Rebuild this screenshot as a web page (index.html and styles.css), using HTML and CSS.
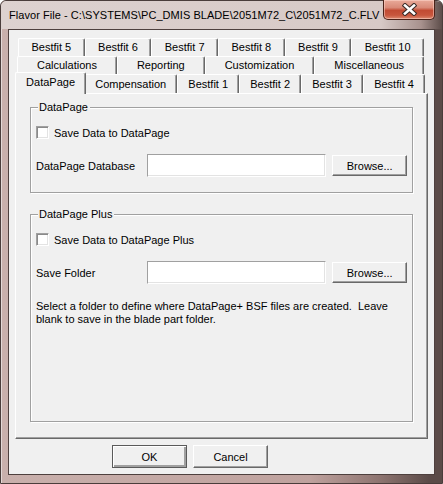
FILE: index.html
```html
<!DOCTYPE html>
<html lang="en">
<head>
    <meta charset="UTF-8">
    <title>Flavor File</title>
    <link rel="stylesheet" href="styles.css">
</head>
<body>
    <div class="window">
        <div class="titlebar">
            <span class="title">Flavor File - C:\SYSTEMS\PC_DMIS BLADE\2051M72_C\2051M72_C.FLV</span>
            <div class="close-btn">
                <svg width="15" height="13" viewBox="0 0 15 13">
                    <path d="M3 2.5 L12 10.5 M12 2.5 L3 10.5" stroke="#3a2a26" stroke-width="4.6" stroke-linecap="square"/>
                    <path d="M3 2.5 L12 10.5 M12 2.5 L3 10.5" stroke="#ffffff" stroke-width="2.6" stroke-linecap="square"/>
                </svg>
            </div>
        </div>

        <div class="client">
            <div class="tabctl">
                <div class="tab-row row-back">
                    <div class="tab">Bestfit 5</div>
                    <div class="tab">Bestfit 6</div>
                    <div class="tab">Bestfit 7</div>
                    <div class="tab">Bestfit 8</div>
                    <div class="tab">Bestfit 9</div>
                    <div class="tab">Bestfit 10</div>
                </div>
                <div class="tab-row row-mid">
                    <div class="tab">Calculations</div>
                    <div class="tab">Reporting</div>
                    <div class="tab">Customization</div>
                    <div class="tab">Miscellaneous</div>
                </div>
                <div class="tab-row row-front">
                    <div class="tab active">DataPage</div>
                    <div class="tab">Compensation</div>
                    <div class="tab">Bestfit 1</div>
                    <div class="tab">Bestfit 2</div>
                    <div class="tab">Bestfit 3</div>
                    <div class="tab">Bestfit 4</div>
                </div>

                <div class="tab-panel">
                    <div class="group">
                        <span class="group-title">DataPage</span>
                        <label class="check-row"><span class="checkbox"></span>Save Data to DataPage</label>
                        <div class="field-row">
                            <span class="field-label">DataPage Database</span>
                            <input type="text" class="textbox">
                            <button class="button">Browse...</button>
                        </div>
                    </div>

                    <div class="group group-grow">
                        <span class="group-title">DataPage Plus</span>
                        <label class="check-row"><span class="checkbox"></span>Save Data to DataPage Plus</label>
                        <div class="field-row">
                            <span class="field-label">Save Folder</span>
                            <input type="text" class="textbox">
                            <button class="button">Browse...</button>
                        </div>
                        <p class="hint">Select a folder to define where DataPage+ BSF files are created.&nbsp; Leave blank to save in the blade part folder.</p>
                    </div>
                </div>
            </div>

            <div class="dlg-buttons">
                <button class="button default">OK</button>
                <button class="button">Cancel</button>
            </div>
        </div>
    </div>
</body>
</html>
```

FILE: styles.css
```css
* {
    margin: 0;
    padding: 0;
    box-sizing: border-box;
}

body {
    font-family: "Liberation Sans", Arial, sans-serif;
    font-size: 11px;
    color: #000;
    background: #fff;
}

.window {
    width: 443px;
    height: 484px;
    display: flex;
    flex-direction: column;
    padding: 0 7px 8px 7px;
    background: linear-gradient(to right, #c9b0ac 0%, #bfa29e 70%, #8d7470 86%, #5b4b48 97%);
    border: 1px solid #4a3d3b;
    border-radius: 6px 6px 0 0;
    box-shadow: inset 1px 1px 0 #e3d8d6;
}

.titlebar {
    height: 28px;
    margin: 0 -7px 0 -7px;
    padding: 0 7px 0 8px;
    display: flex;
    align-items: flex-start;
    background: linear-gradient(to right, #ddd2d0 0px, #d7c9c6 380px, #a8928e 420px, #5d4d4a 441px);
    border-radius: 6px 6px 0 0;
}

.title {
    flex: 1;
    min-width: 0;
    overflow: hidden;
    font-family: "Liberation Sans", Arial, sans-serif;
    font-size: 11px;
    letter-spacing: 0.05px;
    line-height: 16px;
    padding-top: 6px;
    white-space: nowrap;
    color: #000;
}

.close-btn {
    flex: none;
    width: 52px;
    height: 20px;
    margin-top: -1px;
    display: flex;
    align-items: center;
    justify-content: center;
    border: 1px solid #4b2219;
    border-top: none;
    border-radius: 0 0 5px 5px;
    background: linear-gradient(to bottom, #e9aa9a 0%, #d98a78 40%, #c24b33 55%, #c8563d 80%, #dc8a70 100%);
    box-shadow: inset 0 0 0 1px rgba(255, 220, 210, 0.5);
}

.client {
    flex: 1;
    display: flex;
    flex-direction: column;
    background: #f0f0f0;
    border: 1px solid #4e403e;
    padding: 8px 6px 0 6px;
}

.tabctl {
    flex: 1;
    display: flex;
    flex-direction: column;
}

.tab-row {
    display: flex;
    height: 18px;
}

.row-back {
    margin: 0 4px 0 3px;
}

.row-mid {
    margin: 0 4px 0 2px;
}

.row-front {
    height: 19px;
    margin: 0 3px 0 2px;
}

.tab {
    flex: 1 1 auto;
    display: flex;
    align-items: center;
    justify-content: center;
    padding: 0 6px 1px 6px;
    background: #f0f0f0;
    border-top: 1px solid #fff;
    border-left: 1px solid #fff;
    border-right: 1px solid #696969;
    box-shadow: inset -1px 0 0 #a0a0a0;
    border-radius: 2px 2px 0 0;
    white-space: nowrap;
}

.tab.active {
    position: relative;
    z-index: 1;
    height: 22px;
    margin: -2px -2px -1px -2px;
    padding-bottom: 3px;
}

.tab-panel {
    flex: 1;
    display: flex;
    flex-direction: column;
    padding: 13px 14px 16px 14px;
    border-top: 1px solid #fff;
    border-left: 1px solid #fff;
    border-right: 1px solid #696969;
    border-bottom: 1px solid #696969;
    box-shadow: inset -1px -1px 0 #a0a0a0;
}

.group {
    display: flex;
    flex-direction: column;
    padding: 0 5px 15px 5px;
    border: 1px solid #a0a0a0;
    box-shadow: inset 1px 1px 0 #fff, 1px 1px 0 #fff;
}

.group + .group {
    margin-top: 21px;
}

.group-grow {
    flex: 1;
}

.group-title {
    align-self: flex-start;
    margin: -7px 0 0 2px;
    padding: 0 2px 0 1px;
    line-height: 13px;
    background: #f0f0f0;
}

.check-row {
    display: flex;
    align-items: center;
    margin-top: 12px;
    height: 13px;
}

.checkbox {
    width: 13px;
    height: 13px;
    margin-right: 5px;
    background: #fff;
    border-top: 1px solid #a0a0a0;
    border-left: 1px solid #a0a0a0;
    border-right: 1px solid #fff;
    border-bottom: 1px solid #fff;
    box-shadow: inset 1px 1px 0 #8a8a8a, inset -1px -1px 0 #e3e3e3;
}

.field-row {
    display: flex;
    align-items: center;
    margin-top: 15px;
    height: 23px;
}

.field-label {
    width: 112px;
}

.textbox {
    width: 180px;
    height: 23px;
    background: #fff;
    border-top: 1px solid #a0a0a0;
    border-left: 1px solid #a0a0a0;
    border-right: 1px solid #fff;
    border-bottom: 1px solid #fff;
    box-shadow: inset -1px -1px 0 #e3e3e3;
    outline: none;
}

.button {
    width: 75px;
    height: 23px;
    font-family: "Liberation Sans", Arial, sans-serif;
    font-size: 11px;
    color: #000;
    background: #f0f0f0;
    border-top: 1px solid #fff;
    border-left: 1px solid #fff;
    border-right: 1px solid #696969;
    border-bottom: 1px solid #696969;
    box-shadow: inset -1px -1px 0 #a0a0a0;
}

.field-row .button {
    height: 21px;
    margin-left: 6px;
}

.button.default {
    border: 1px solid #5a5a5a;
    box-shadow: inset 1px 1px 0 #fff, inset -2px -2px 0 #a0a0a0, inset -1px -1px 0 #696969;
}

.hint {
    margin-top: 16px;
    line-height: 13px;
    width: 360px;
}

.dlg-buttons {
    display: flex;
    gap: 6px;
    padding: 6px 0 6px 97px;
}
```
